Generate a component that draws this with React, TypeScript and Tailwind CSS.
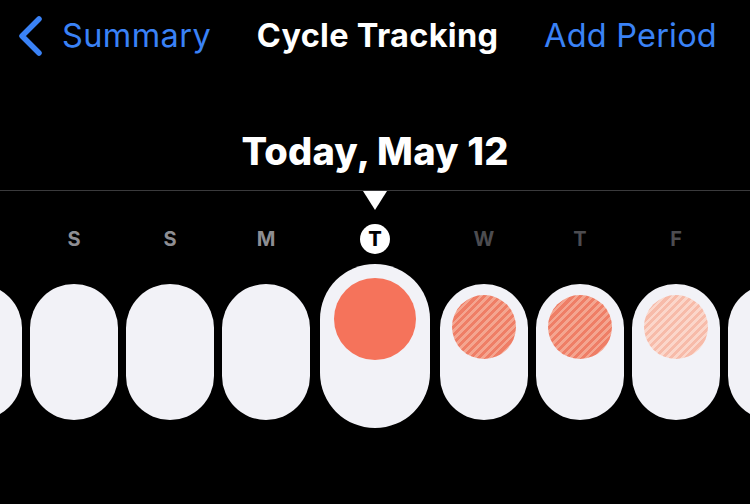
import React from 'react';

type Day = {
  letter: string;
  kind: 'empty' | 'period' | 'predicted' | 'faint';
  tone: 'past' | 'today' | 'future';
};

const days: Day[] = [
  { letter: '', kind: 'empty', tone: 'past' },
  { letter: 'S', kind: 'empty', tone: 'past' },
  { letter: 'S', kind: 'empty', tone: 'past' },
  { letter: 'M', kind: 'empty', tone: 'past' },
  { letter: 'T', kind: 'period', tone: 'today' },
  { letter: 'W', kind: 'predicted', tone: 'future' },
  { letter: 'T', kind: 'predicted', tone: 'future' },
  { letter: 'F', kind: 'faint', tone: 'future' },
  { letter: '', kind: 'empty', tone: 'future' },
];

function Dot({ kind }: { kind: Day['kind'] }) {
  if (kind === 'predicted') {
    return (
      <div className="mt-[11px] w-16 h-16 rounded-full bg-[repeating-linear-gradient(135deg,#ef7e66_0px,#ef7e66_3px,#f4a590_3px,#f4a590_5.6px)]" />
    );
  }
  if (kind === 'faint') {
    return (
      <div className="mt-[11px] w-16 h-16 rounded-full bg-[repeating-linear-gradient(135deg,#f7bba9_0px,#f7bba9_3px,#fbd6ca_3px,#fbd6ca_5.6px)]" />
    );
  }
  return null;
}

export default function App() {
  return (
    <div
      className="w-[750px] h-[504px] bg-black text-white overflow-hidden"
      style={{ fontFamily: 'Inter, "Noto Sans", sans-serif' }}
    >
      {/* Nav bar */}
      <div className="h-[72px] flex items-center justify-between pl-[18px] pr-[33px]">
        <div className="flex items-center gap-[19px] text-[#3a82f6]">
          <svg width="25" height="40" viewBox="0 0 25 40" fill="none">
            <path
              d="M21 3 L4 20 L21 37"
              stroke="currentColor"
              strokeWidth="5.5"
              strokeLinecap="round"
              strokeLinejoin="round"
            />
          </svg>
          <span className="text-[32.5px] leading-none tracking-[0.4px]">Summary</span>
        </div>
        <span className="text-[32.5px] leading-none font-bold tracking-[0.3px]">Cycle Tracking</span>
        <span className="text-[32.5px] leading-none text-[#3a82f6] tracking-[0.2px]">Add Period</span>
      </div>

      {/* Date title */}
      <div className="h-[118px] flex justify-center pt-[60px]">
        <h1 className="text-[38px] leading-none font-extrabold tracking-[0.2px]">Today, May 12</h1>
      </div>

      {/* Divider + marker */}
      <div className="border-t border-[#3a3a3c]" />
      <div className="flex justify-center">
        <svg width="24" height="19" viewBox="0 0 24 19">
          <path d="M0 0 L24 0 L12 19 Z" fill="white" />
        </svg>
      </div>

      {/* Week letters */}
      <div className="flex justify-center gap-2 mt-[14px] h-[30px] items-center">
        {days.map((d, i) => (
          <div
            key={i}
            className={
              d.tone === 'today'
                ? 'w-[110px] mx-[2px] shrink-0 flex justify-center'
                : 'w-[88px] shrink-0 flex justify-center'
            }
          >
            {d.tone === 'today' ? (
              <div className="w-[30px] h-[30px] rounded-full bg-white text-black flex items-center justify-center text-[20px] font-extrabold leading-none">
                {d.letter}
              </div>
            ) : (
              <span
                className={
                  d.tone === 'past'
                    ? 'text-[20px] font-bold leading-none text-[#8e8e93]'
                    : 'text-[20px] font-bold leading-none text-[#4c4c50]'
                }
              >
                {d.letter}
              </span>
            )}
          </div>
        ))}
      </div>

      {/* Day pills */}
      <div className="flex justify-center items-start gap-2 mt-[10px]">
        {days.map((d, i) =>
          d.tone === 'today' ? (
            <div
              key={i}
              className="w-[110px] h-[164px] mx-[2px] shrink-0 rounded-[55px] bg-[#f2f2f7] flex justify-center"
            >
              <div className="mt-[14px] w-[82px] h-[82px] rounded-full bg-[#f5735b]" />
            </div>
          ) : (
            <div
              key={i}
              className="w-[88px] h-[136px] mt-[20px] shrink-0 rounded-[44px] bg-[#f2f2f7] flex justify-center"
            >
              <Dot kind={d.kind} />
            </div>
          )
        )}
      </div>
    </div>
  );
}
